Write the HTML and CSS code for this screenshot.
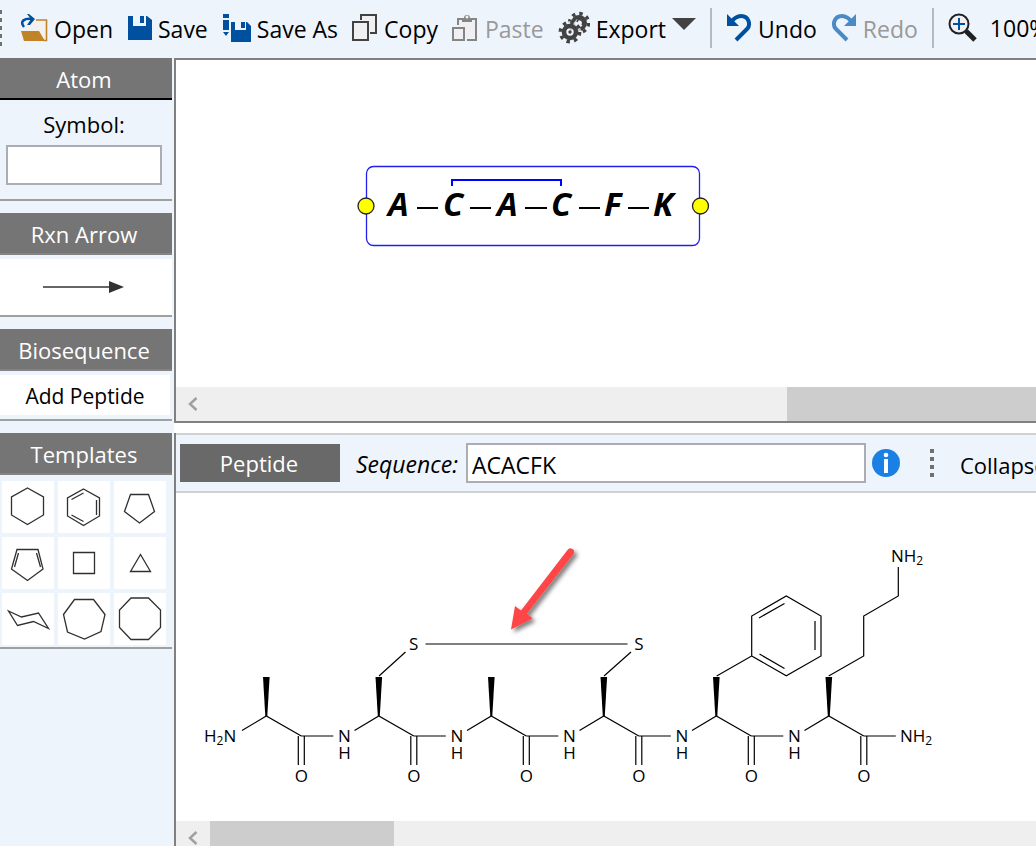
FILE: index.html
```
<!DOCTYPE html>
<html lang="en">
<head>
<meta charset="utf-8">
<title>Molecule Editor</title>
<link rel="stylesheet" href="styles.css">
</head>
<body>
<header class="toolbar">
  <span class="grip"></span>
  <button class="tool"><svg width="28" height="30" viewBox="0 0 28 30"><path d="M7 16V12l8-5h12v21z" fill="#f2f1ee"/><path d="M16 7h10.5v20.5h-3" fill="none" stroke="#c08327" stroke-width="1.6"/><path d="M1 18h18l6 10H4z" fill="#c08327"/><path d="M4 14C-1 8 5 5 12 6" fill="none" stroke="#0050a0" stroke-width="2.6"/><path d="M7 1h2l6 5-5 6H7l4-6z" fill="#0050a0"/></svg><span>Open</span></button>
  <button class="tool"><svg width="25" height="30" viewBox="0 0 25 30"><path d="M1 3h5v10h13V3h1l5 4v20H1z" fill="#0050a0"/><path d="M13 3h4v7h-4z" fill="#0050a0"/></svg><span>Save</span></button>
  <button class="tool"><svg width="29" height="30" viewBox="0 0 29 30"><path d="M1 1h6v4H1zM1 7h6v10H1zM1 19h6l-3 4zM9 9h4v8h11V9h1l4 4v16H9zM19 9h4v6h-4z" fill="#0050a0"/></svg><span>Save As</span></button>
  <button class="tool"><svg width="26" height="30" viewBox="0 0 26 30"><path d="M9 7V2h15v18h-6" fill="#f0eff1" stroke="#424242" stroke-width="2"/><path d="M1 9h15v18H1z" fill="#f0eff1" stroke="#424242" stroke-width="2"/></svg><span>Copy</span></button>
  <button class="tool" disabled><svg width="27" height="30" viewBox="0 0 27 30"><path d="M6 12V6h18v21h-9" fill="#f0eff1" stroke="#858585" stroke-width="2"/><path d="M1 15h11v12H1z" fill="#f0eff1" stroke="#858585" stroke-width="2"/><path d="M10 9V5h2a3 3 0 0 1 6 0h2v4z" fill="#858585"/><circle cx="15" cy="4" r="1.5" fill="#eef4fc"/></svg><span>Paste</span></button>
  <button class="tool"><svg width="32" height="34" viewBox="0 0 32 34"><g fill="none" stroke="#424242"><circle cx="21" cy="12" r="6" stroke-width="4"/><circle cx="21" cy="12" r="9.5" stroke-width="3.4" stroke-dasharray="3.4 4.06"/></g><circle cx="12" cy="21" r="11" fill="#eef4fc" opacity=".75"/><g fill="none" stroke="#424242"><circle cx="12" cy="21" r="6" stroke-width="4.6"/><circle cx="12" cy="21" r="9.6" stroke-width="3.6" stroke-dasharray="3.4 4.14"/><path d="M19 11q1-4 4-2t1 5" stroke-width="1.6"/></g><circle cx="12" cy="21" r="1.7" fill="#424242"/></svg><span>Export</span><svg class="drop" width="24" height="12" viewBox="0 0 24 12"><path d="M0 0h24L12 12z" fill="#424242"/></svg></button>
  <span class="divider"></span>
  <button class="tool"><svg width="26" height="30" viewBox="0 0 26 30"><path d="M4 10C8 5 11 3 15 3C23 3 25 12 21 16L10 27" fill="none" stroke="#0050a0" stroke-width="4"/><path d="M1 1l12 12H1z" fill="#0050a0"/></svg><span>Undo</span></button>
  <button class="tool" disabled><svg width="26" height="30" viewBox="0 0 26 30"><path d="M22 10C18 5 15 3 11 3C3 3 1 12 5 16L16 27" fill="none" stroke="#4b8ac4" stroke-width="4"/><path d="M25 1L13 13h12z" fill="#4b8ac4"/></svg><span>Redo</span></button>
  <span class="divider"></span>
  <button class="tool zoom"><svg width="30" height="30" viewBox="0 0 30 30"><path d="M18 18l9 9" stroke="#212121" stroke-width="5"/><circle cx="11" cy="11" r="9.5" fill="#f0eff1" stroke="#212121" stroke-width="2"/><path d="M5 11h12M11 5v12" stroke="#0050a0" stroke-width="2"/></svg>100%</button>
</header>
<div class="workspace">
  <aside class="sidebar">
    <section class="group atom">
      <h2 class="heading">Atom</h2>
      <label for="symbol">Symbol:</label>
      <input id="symbol" class="field" type="text">
    </section>
    <section class="group">
      <h2 class="heading">Rxn Arrow</h2>
      <button class="choice arrow" aria-label="Reaction arrow"><svg width="82" height="14" viewBox="0 0 82 14"><path d="M0 7h68" stroke="#333" stroke-width="1.5"/><path d="M66 1l15 6-15 6z" fill="#333"/></svg></button>
    </section>
    <section class="group">
      <h2 class="heading">Biosequence</h2>
      <button class="choice peptide">Add Peptide</button>
    </section>
    <section class="group">
      <h2 class="heading">Templates</h2>
      <div class="templates">
        <button aria-label="Cyclohexane"><svg viewBox="0 0 52 52"><path d="M25.500 7l16 9v18l-16 9.500-16-9.500V16z"/></svg></button>
        <button aria-label="Benzene"><svg viewBox="0 0 52 52"><path d="M25.500 8l16 9v18l-16 9.500-16-9.500V17zM25.500 12l-12 6.500M38.500 19v15M25.500 40.500l-12-6.500"/></svg></button>
        <button aria-label="Cyclopentane"><svg viewBox="0 0 52 52"><path d="M16.500 13.500h18l6 17-15 11.500-15-11.500z"/></svg></button>
        <button aria-label="Cyclopentadiene"><svg viewBox="0 0 52 52"><path d="M15 12.500h21l5 19.500-15.500 11.500L9.500 32zM16.500 16l-4 14M34.500 16l4 14"/></svg></button>
        <button aria-label="Cyclobutane"><svg viewBox="0 0 52 52"><path d="M15.500 15.500h21v21h-21z"/></svg></button>
        <button aria-label="Cyclopropane"><svg viewBox="0 0 52 52"><path d="M26.500 17.500l10 17h-20z"/></svg></button>
        <button aria-label="Chair"><svg viewBox="0 0 52 52"><path d="M6.500 18l13 6 17-4 10 15.500-15-7-16 4z"/></svg></button>
        <button aria-label="Cycloheptane"><svg viewBox="0 0 52 52"><path d="M16.500 6.500h19L47 21.500l-4 17-16.500 7.500L9.500 39l-4-17.500z"/></svg></button>
        <button aria-label="Cyclooctane"><svg viewBox="0 0 52 52"><path d="M17 5h17.500l12 12v17.500l-12 12H17l-11.500-12V17z"/></svg></button>
      </div>
    </section>
  </aside>
  <main class="panes">
    <section class="pane upper">
      <div class="canvas">
        <svg width="860" height="327" viewBox="176 60 860 327">
          <rect x="366.500" y="166.500" width="333" height="79" rx="7" fill="none" stroke="#2020e8" stroke-width="1.300"/>
          <path d="M452 186v-6h109v6" fill="none" stroke="#00f" stroke-width="2"/>
          <path d="M417 208h21M470 208h21M525 208h22M579 208h21M628 208h21" stroke="#000" stroke-width="2"/>
          <g class="residues"><text x="388" y="216">A</text><text x="443" y="216">C</text><text x="497" y="216">A</text><text x="551" y="216">C</text><text x="604" y="216">F</text><text x="653" y="216">K</text></g>
          <g fill="#ff0" stroke="#222" stroke-width="1.300"><circle cx="366" cy="206" r="8"/><circle cx="700.500" cy="206" r="8"/></g>
        </svg>
      </div>
      <div class="scroll"><button aria-label="Scroll left"><svg width="10" height="14" viewBox="0 0 10 14"><path d="M8.500 1L2 7l6.500 6" fill="none" stroke="#a0a0a0" stroke-width="2.500"/></svg></button><span class="thumb end"></span></div>
    </section>
    <section class="pane lower">
      <div class="seqbar">
        <h2 class="title">Peptide</h2>
        <label for="sequence">Sequence:</label>
        <input id="sequence" class="field" type="text" value="ACACFK">
        <svg class="info" width="28" height="28" viewBox="0 0 28 28"><circle cx="14" cy="14" r="14" fill="#1b80e4"/><circle cx="14" cy="6" r="2.300" fill="#fff"/><path d="M12 10h4v14h-4z" fill="#fff"/></svg>
        <span class="grip"></span>
        <button class="collapse">Collapse</button>
      </div>
      <div class="canvas">
        <svg width="860" height="328" viewBox="176 493 860 328">
          <defs>
            <filter id="shadow" x="-30%" y="-30%" width="170%" height="170%"><feDropShadow dx="3" dy="3" stdDeviation="2" flood-opacity=".5"/></filter>
            <g id="unit"><path class="bond" d="M242 730.500l24.300-14.500 35 20M298.300 736v29M304.300 736v29M301.300 736h32"/><path d="M263 677h6.600l-2.300 39h-2z"/><text x="301.300" y="782">O</text></g>
            <g id="amide"><text x="344.500" y="742">N</text><text x="344.500" y="759">H</text></g>
          </defs>
          <use href="#unit"/><use href="#unit" x="112.500"/><use href="#unit" x="225"/><use href="#unit" x="337.500"/><use href="#unit" x="450"/><use href="#unit" x="562.500"/>
          <use href="#amide"/><use href="#amide" x="112.500"/><use href="#amide" x="225"/><use href="#amide" x="337.500"/><use href="#amide" x="450"/>
          <path class="bond" d="M379 676l26.500-24M604 676l27-24M425.500 644h202"/>
          <path class="bond" d="M716.700 676l35-20v-40l34.600-20 34.700 20v40l-34.700 19.700-34.600-19.700M759 618l25.500-14.500M815 621v29M759.500 654l25 14.500"/>
          <path class="bond" d="M828.700 676l35-20v-40l34.600-20v-29"/>
          <text x="413.700" y="650">S</text><text x="639" y="650">S</text>
          <text class="start" x="204" y="742">H<tspan class="sub" dy="3">2</tspan><tspan dy="-3">N</tspan></text>
          <text class="start" x="900" y="742">NH<tspan class="sub" dy="3">2</tspan></text>
          <text class="start" x="891" y="562">NH<tspan class="sub" dy="3">2</tspan></text>
          <path d="M567.500 550a3.500 3.500 0 0 1 6 4L527 613.500l5.500 5L511 629.500l4-23.500 6 4.500z" fill="#ff4444" filter="url(#shadow)"/>
        </svg>
      </div>
      <div class="scroll"><button aria-label="Scroll left"><svg width="10" height="14" viewBox="0 0 10 14"><path d="M8.500 1L2 7l6.500 6" fill="none" stroke="#a0a0a0" stroke-width="2.500"/></svg></button><span class="thumb short"></span></div>
    </section>
  </main>
</div>
</body>
</html>
```
FILE: styles.css
```
* { box-sizing: border-box; }
body {
  margin: 0;
  height: 100vh;
  display: flex;
  flex-direction: column;
  overflow: hidden;
  background: #eef4fc;
  color: #000;
  font: 22px/30px "Open Sans", "Noto Sans", sans-serif;
}
button {
  margin: 0;
  padding: 0;
  border: 0;
  background: none;
  color: inherit;
  font: inherit;
  display: flex;
  align-items: center;
}
svg { display: block; flex: none; }
h2 { margin: 0; font: inherit; }

.toolbar {
  display: flex;
  align-items: center;
  flex: none;
  height: 58px;
  padding-bottom: 2px;
  gap: 14px;
  font-size: 23px;
  white-space: nowrap;
  overflow: hidden;
}
.grip {
  flex: none;
  width: 4px;
  height: 28px;
  background: repeating-linear-gradient(#707070 0 4px, transparent 4px 8px);
}
.toolbar .grip { width: 2px; height: 36px; margin-right: 4px; }
.tool { gap: 6px; flex: none; }
.tool span { padding-top: 2px; }
.tool:disabled { color: #999; }
.tool .drop { margin-bottom: 8px; }
.divider { flex: none; width: 2px; height: 40px; background: #b4bac4; }
.zoom { gap: 12px; }

.workspace { display: flex; flex: 1; min-height: 0; }
.sidebar {
  flex: none;
  width: 172px;
  margin-right: 2px;
  display: flex;
  flex-direction: column;
  gap: 12px;
}
.group {
  display: flex;
  flex-direction: column;
  border-bottom: 2px solid #a0a0a0;
}
.heading {
  height: 42px;
  line-height: 42px;
  padding-right: 4px;
  text-align: center;
  color: #fff;
  background: #757575;
  border-bottom: 2px solid #848484;
}
.atom { padding-bottom: 14px; text-align: center; }
.atom .heading { border-color: #000; }
.atom label { padding: 4px 4px 0 0; line-height: 41px; }
.field {
  min-width: 0;
  height: 40px;
  border: 2px solid #abadb3;
  background: #fff;
  font: inherit;
  padding: 6px 4px 2px;
}
.atom .field { margin: 0 10px 0 6px; }
.choice { justify-content: center; background: #fff; margin-top: 4px; }
.arrow { height: 56px; padding-right: 4px; }
.peptide { height: 40px; margin: 4px 2px 4px 0; padding-top: 2px; font-size: 21px; }
.templates {
  display: grid;
  grid-template-columns: repeat(3, 1fr);
  gap: 4px;
  padding: 6px 6px 2px 2px;
}
.templates button { background: #fff; }
.templates svg { width: 100%; fill: none; stroke: #303030; stroke-width: 1.3; }

.panes { flex: 1; min-width: 0; display: flex; flex-direction: column; gap: 10px; background: #fff; }
.pane { border-left: 2px solid #808080; flex: none; }
.upper { border-top: 2px solid #808080; border-bottom: 2px solid #808080; }
.canvas { overflow: hidden; background: #fff; }
.scroll { display: flex; height: 34px; background: #efefef; }
.scroll button { flex: none; width: 34px; justify-content: center; }
.thumb { background: #cdcdcd; }
.end { flex: 1; margin-left: 577px; }
.short { width: 184px; }
.seqbar {
  display: flex;
  align-items: center;
  height: 60px;
  padding-left: 4px;
  background: #eef4fc;
  border-top: 2px solid #d0d0d0;
  border-bottom: 2px solid #d0d0d0;
  overflow: hidden;
}
.title {
  flex: none;
  width: 160px;
  height: 38px;
  line-height: 38px;
  padding-right: 2px;
  text-align: center;
  color: #fff;
  background: #696969;
}
.seqbar label { flex: none; margin: 2px 8px 0 16px; font-size: 23px; font-style: italic; }
.seqbar .field { flex: none; width: 400px; font-size: 23px; }
.info { margin: 0 30px 0 6px; }
.collapse { flex: none; margin-left: 26px; padding-top: 4px; }

text { font: 17px "Open Sans", "Noto Sans", sans-serif; text-anchor: middle; fill: #000; }
.residues text { font: italic bold 33px "Open Sans", "Noto Sans", sans-serif; text-anchor: start; }
text.start { text-anchor: start; }
.sub { font-size: 12px; }
.bond { fill: none; stroke: #000; stroke-width: 1.2; }
```
